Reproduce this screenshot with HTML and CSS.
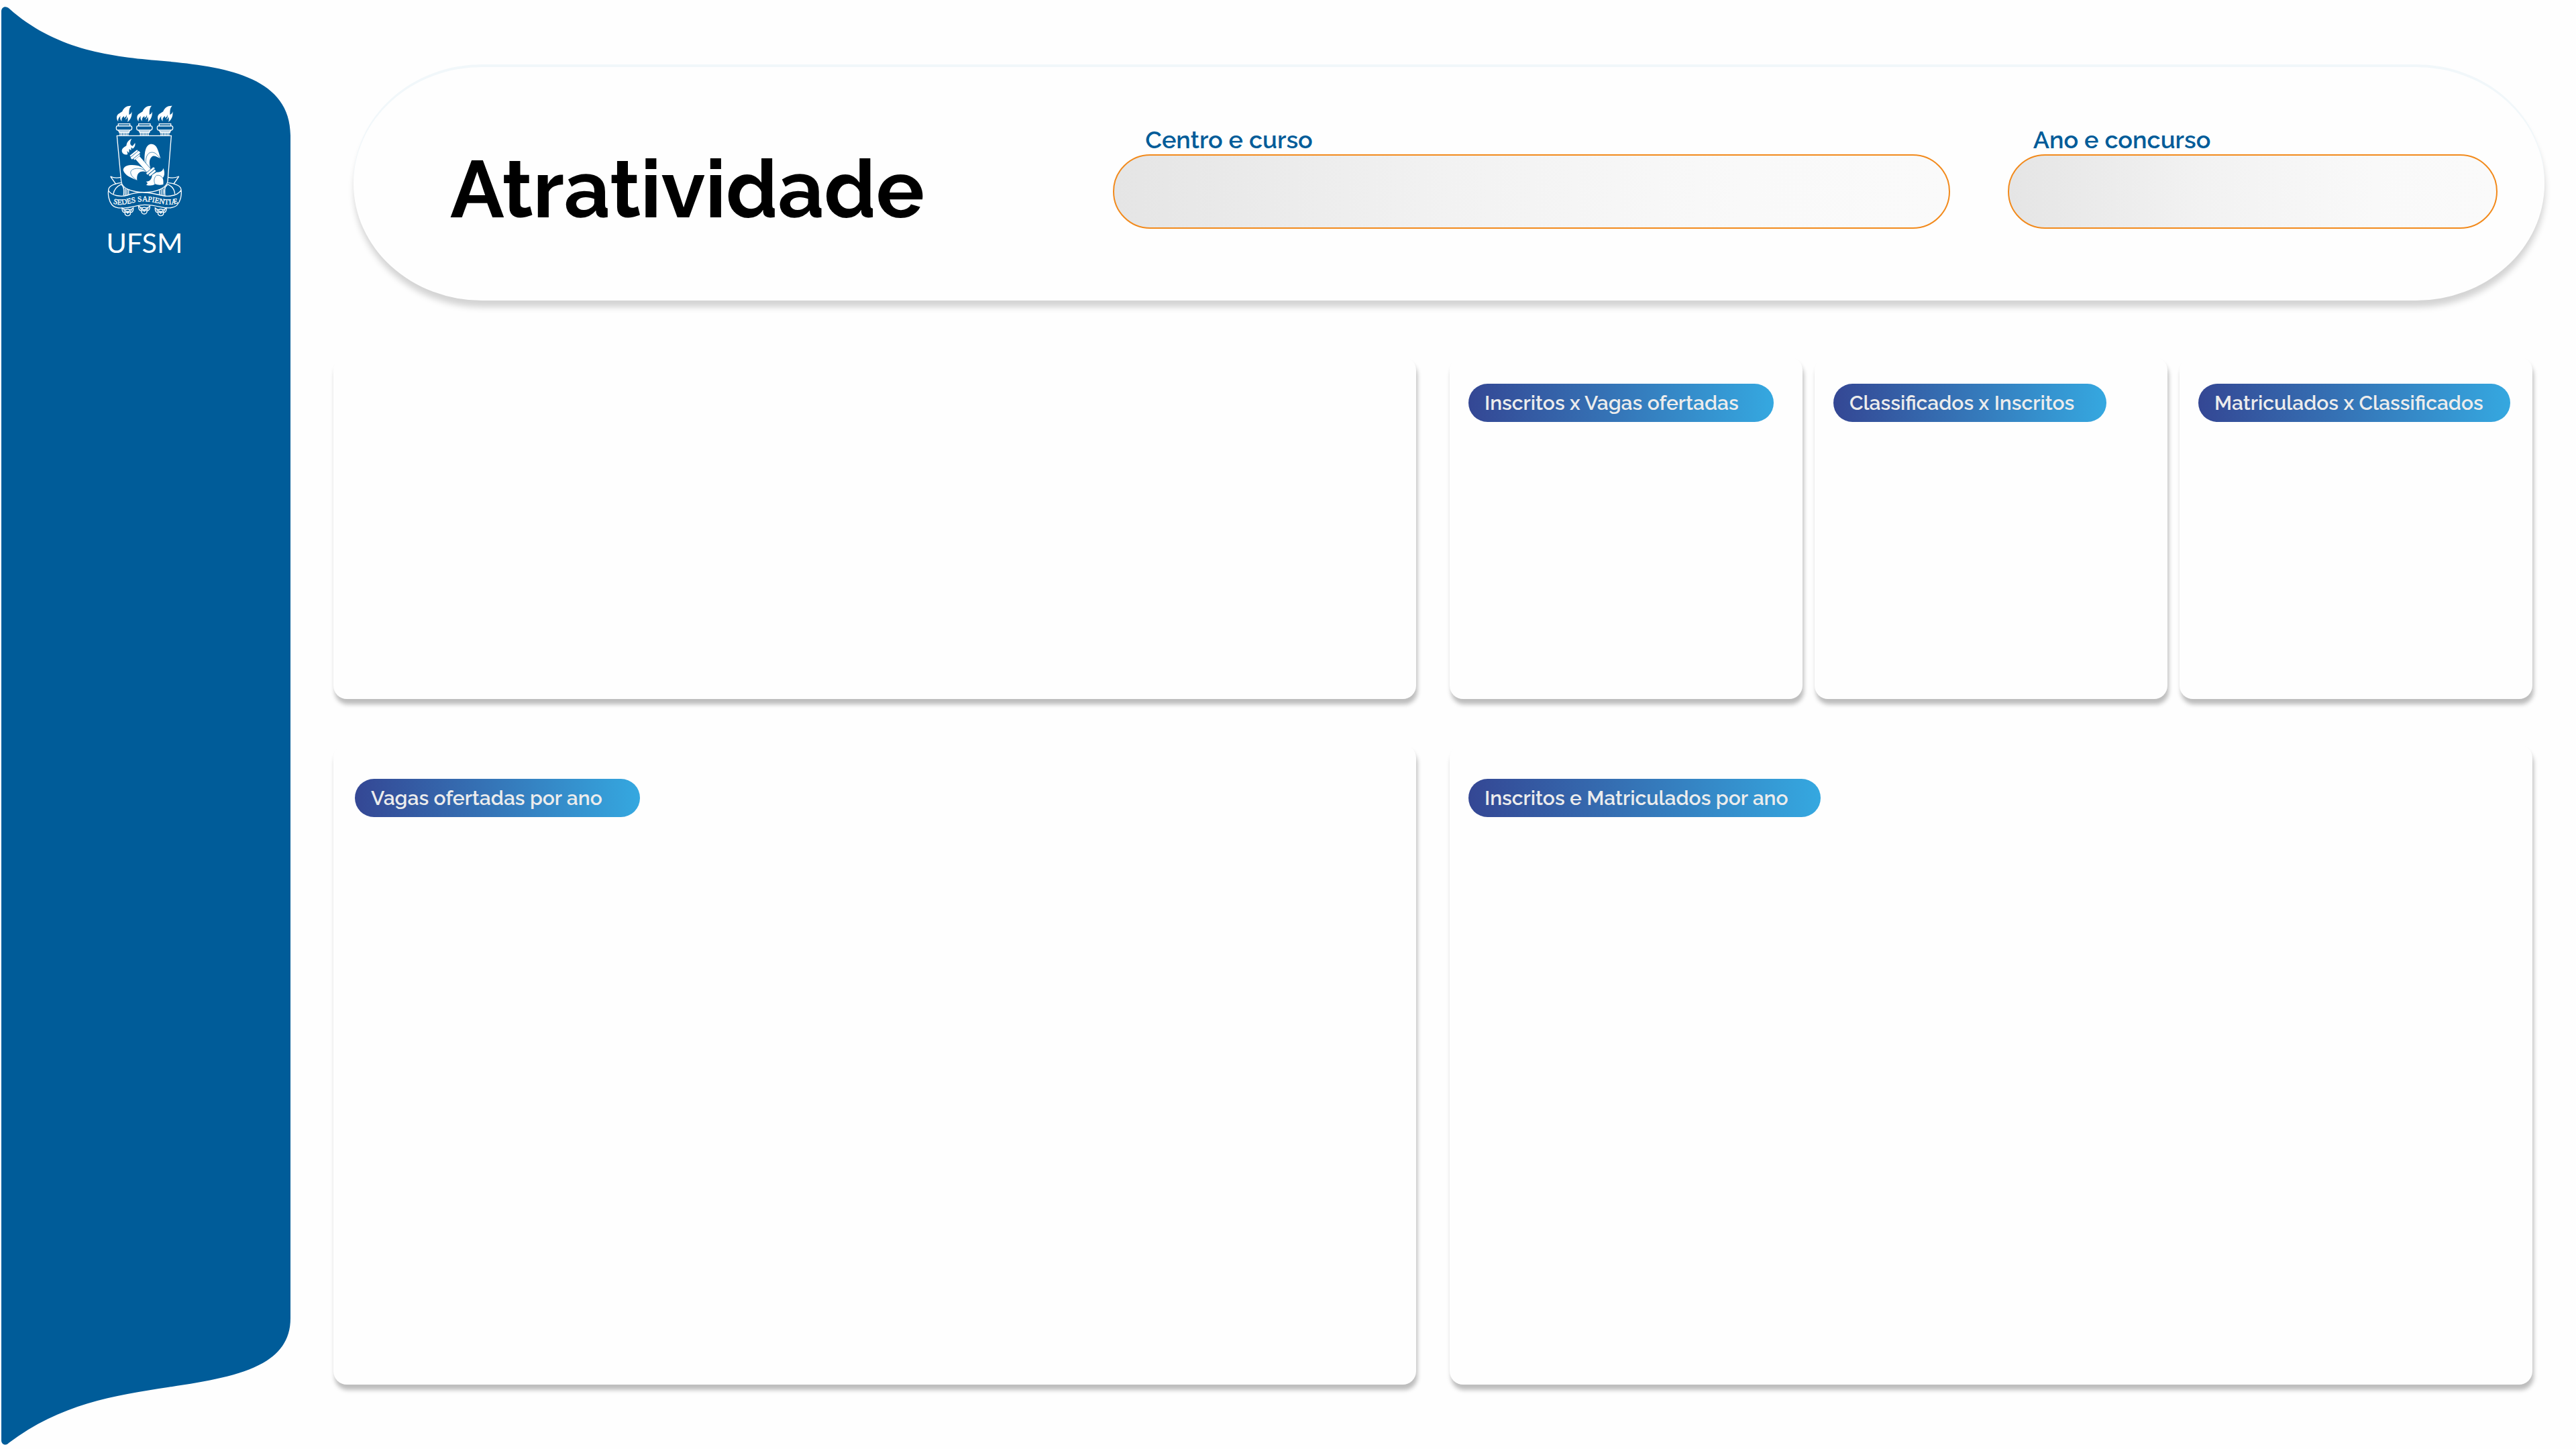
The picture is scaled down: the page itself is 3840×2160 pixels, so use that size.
FILE: index.html
```html
<!DOCTYPE html>
<html lang="pt-BR">
<head>
<meta charset="utf-8">
<title>Atratividade</title>
<link rel="stylesheet" href="styles.css">
</head>
<body>
<aside class="sidebar">
  <svg class="sidebar-top" viewBox="0 0 433 202" aria-hidden="true"><path d="M2 202V17C2 10 9 8 14 13C80 72 160 84 233 90C325 98 433 110 433 202Z"/></svg>
  <div class="sidebar-fill"></div>
  <svg class="sidebar-bottom" viewBox="0 0 433 195" aria-hidden="true"><path d="M2 0H433C433 73 350 88 250 103C170 115 90 128 13 186C8 191 2 188 2 182Z"/></svg>
  <svg class="logo" viewBox="0 0 510 750" role="img" aria-label="UFSM">
    <defs>
      <g id="torch">
        <path class="solid" d="M197 53C176 52 163 62 157 78C148 86 132 89 132 106C132 114 135 119 139 124C137 112 142 106 149 99C145 110 149 117 155 122C152 109 158 104 165 99L165 107C171 106 175 100 176 93C178 104 174 110 170 114L176 112L180 103C183 111 183 119 180 126C190 119 202 103 199 79C197 88 193 91 187 93C188 79 185 66 197 53Z"/>
        <rect x="139" y="134" width="52" height="9"/>
        <path d="M137 143H193Q200 143 200 152T193 162H137Q130 162 130 152T137 143ZM138 162L142 168H188L192 162M144 169V173H187V169M147 173V186M154 175V186M161 175V186M168 175V186M175 175V186M182 173V186"/>
      </g>
      <g id="root">
        <path d="M-25 -15C-20 -10 -18 -8 -9 -7C-4 -10 4 -10 9 -7C18 -8 20 -10 25 -15C26 -4 22 6 12 5C15 14 7 20 0 20C-7 20 -15 14 -12 5C-22 6 -26 -4 -25 -15Z"/>
        <path d="M-18 -8L-11 3M18 -8L11 3M-8 -7C-12 0 -4 3 0 0C4 3 12 0 8 -7M-8 7C-7 2 -2 3 0 8C2 3 7 2 8 7"/>
      </g>
    </defs>
    <g class="line">
      <use href="#torch"/><use href="#torch" x="91"/><use href="#torch" x="183"/>
      <path d="M133 187H376L360 390C357 420 310 440 255 440C198 440 155 423 152 390Z"/>
      <path class="solid" d="M199 200C181 208 177 219 175 232C161 239 152 248 156 260C161 270 170 274 181 270L178 255L187 264L188 246L196 253L197 239L204 245C213 238 216 230 214 219L203 233L197 230C189 222 193 211 199 200Z"/>
      <path class="solid" d="M257 310C254 255 263 224 288 224C311 225 317 250 328 289C309 281 299 272 288 282C276 292 277 314 283 331C270 326 260 320 257 310Z"/>
      <path class="solid" d="M266 350C241 341 219 350 223 387C197 375 167 365 161 340C164 318 196 316 224 320C243 324 258 336 266 350Z"/>
      <path class="crease" d="M262 316C260 285 268 261 290 261C308 262 316 277 328 290M263 346C241 327 196 330 194 350C195 370 211 376 223 388"/>
      <g transform="rotate(-39 214 272)">
        <path class="handle" d="M202 288H226L229 367H205Z"/>
        <path class="solid" d="M193 260H235V267H193ZM190 269H238V280H190ZM197 282H231V288H197Z"/>
      </g>
      <path class="solid" d="M290 362C290 380 280 392 263 392C273 398 270 404 263 407C279 411 295 411 303 403C315 408 328 408 340 405C341 395 341 385 337 376C347 368 347 350 341 332C337 346 325 352 310 350Z"/>
      <path class="crease" d="M303 403C296 388 300 372 310 364C322 362 333 367 337 376"/>
      <g transform="rotate(-40 288 350)"><rect class="ring" x="265" y="337" width="46" height="11" rx="4"/><rect class="ring" x="269" y="349" width="38" height="11" rx="4"/></g>
      <path d="M152 397C118 402 94 413 95 432C108 455 149 462 180 453C207 443 234 440 257 441C298 441 330 458 360 457C386 456 410 447 420 430C420 411 391 401 361 397M95 432C92 450 97 479 110 495C121 509 145 513 175 509C204 506 230 496 257 496C280 496 300 499 330 506C355 512 388 512 402 497C418 480 423 452 420 430"/>
      <path d="M153 404C133 413 119 429 117 449M153 405C164 415 165 428 163 453M360 404C376 411 390 427 392 448M360 405C344 418 343 433 347 454"/>
      <path d="M104 369C118 376 133 377 150 373M104 369L128 403M410 369C394 376 379 377 362 373M410 369L387 402"/>
      <path d="M164 418V454M171 422V454M178 425V452M185 427V450M323 427V450M331 425V453M339 421V455M347 417V455"/>
      <use href="#root" x="181" y="525"/><use href="#root" x="255" y="517"/><use href="#root" x="329" y="525"/>
    </g>
    <path id="motto" class="guide" d="M116 490C160 506 205 480 257 480C307 481 345 504 400 490"/>
    <text class="motto"><textPath href="#motto">SEDES SAPIENTIÆ</textPath></text>
    <text class="brand" x="256" y="712">UFSM</text>
  </svg>
</aside>
<main class="main">
  <header class="header">
    <h1 class="title">Atratividade</h1>
    <form class="filters">
      <div class="field field-course">
        <label for="curso">Centro e curso</label>
        <select id="curso"></select>
      </div>
      <div class="field field-year">
        <label for="concurso">Ano e concurso</label>
        <select id="concurso"></select>
      </div>
    </form>
  </header>
  <div class="board">
    <section class="card"></section>
    <div class="ratios">
      <section class="card"><h2 class="tag tag-m">Inscritos x Vagas ofertadas</h2></section>
      <section class="card"><h2 class="tag tag-s">Classificados x Inscritos</h2></section>
      <section class="card"><h2 class="tag tag-l">Matriculados x Classificados</h2></section>
    </div>
    <section class="card card-chart"><h2 class="tag tag-year">Vagas ofertadas por ano</h2></section>
    <section class="card card-chart"><h2 class="tag tag-xl">Inscritos e Matriculados por ano</h2></section>
  </div>
</main>
</body>
</html>
```
FILE: styles.css
```css
* { box-sizing: border-box; }
body {
  margin: 0;
  min-height: 100vh;
  display: flex;
  background: #fefefe;
  color: #000;
  font-family: Raleway, Lato, sans-serif;
}
h1, h2 { margin: 0; }

.sidebar {
  position: relative;
  flex: 0 0 433px;
  display: flex;
  flex-direction: column;
  fill: #005c99;
}
.sidebar svg { display: block; flex: none; }
.sidebar-fill { flex: 1; margin-left: 2px; background: #005c99; }
.logo {
  position: absolute;
  top: 140px;
  left: 130px;
  width: 170px;
}
.line { fill: none; stroke: #fff; stroke-width: 4; }
.solid { fill: #fff; stroke: none; }
.handle { fill: #fff; stroke: #005c99; stroke-width: 2; }
.crease { stroke: #005c99; stroke-width: 2; }
.ring { fill: #fff; stroke: #005c99; stroke-width: 2; }
.guide { fill: none; }
.motto { fill: #fff; stroke: #fff; stroke-width: 1; font: 34px "Liberation Serif", serif; }
.brand { fill: #fff; font: 124px Lato, sans-serif; text-anchor: middle; }

.main {
  flex: 1;
  min-width: 0;
  display: flex;
  flex-direction: column;
  gap: 84px;
  padding: 100px 65px 96px 64px;
}
.header {
  display: flex;
  align-items: center;
  height: 348px;
  margin: 0 -18px 0 30px;
  padding: 0 70px 0 144px;
  border-radius: 192px / 174px;
  background: #fefefe;
  box-shadow: 0 -4px 0 #f1f7fa, 1px 10px 10px rgba(0, 0, 0, .17);
}
.title { flex: 988; padding-top: 16px; font-size: 120px; font-weight: 700; line-height: 160px; }
.filters { flex: 2063; display: flex; gap: 86px; }
.field { display: flex; flex-direction: column; }
.field-course { flex: 1247; }
.field-year { flex: 730; }
.field label {
  padding-left: 48px;
  color: #005c99;
  font-size: 36px;
  font-weight: 600;
  line-height: 44px;
}
.field-year label { padding-left: 38px; }
.field select {
  appearance: none;
  width: 100%;
  height: 111px;
  margin-bottom: 22px;
  padding: 0 48px;
  border: 2px solid #f28a1c;
  border-radius: 56px;
  background: linear-gradient(90deg, #e5e5e5, #f2f2f2 40%, #f9f9f9 75%, #fafafa);
  font: inherit;
}

.board {
  flex: 1;
  display: grid;
  grid-template-columns: 1fr 1fr;
  grid-template-rows: 510px 1fr;
  gap: 68px 50px;
}
.ratios { display: grid; grid-template-columns: repeat(3, 1fr); gap: 18px; }
.card {
  padding: 40px 28px;
  border-radius: 20px;
  background: #fefefe;
  box-shadow: 2px 8px 6px rgba(0, 0, 0, .26);
}
.card-chart { padding-top: 51px; }
.card-chart:nth-child(3) { padding-left: 32px; }
.tag {
  height: 57px;
  padding-left: 24px;
  border-radius: 29px;
  background: linear-gradient(90deg, #344794, #3572b5 45%, #35a8e0);
  color: #ececec;
  font-size: 30px;
  font-weight: 600;
  line-height: 57px;
  white-space: nowrap;
}
.tag-s { width: 407px; }
.tag-year { width: 425px; }
.tag-m { width: 455px; }
.tag-l { width: 465px; }
.tag-xl { width: 525px; }
```
